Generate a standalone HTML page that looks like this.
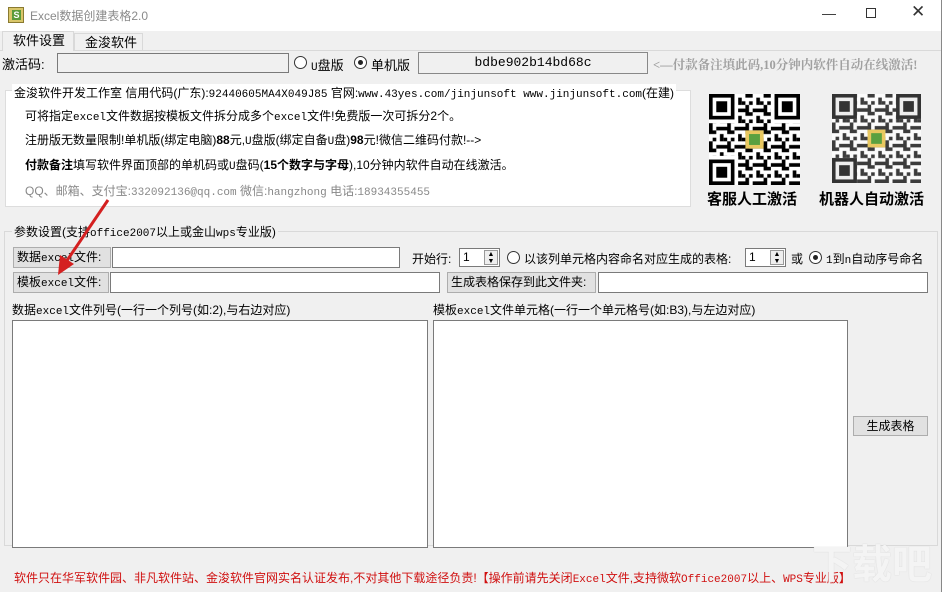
<!DOCTYPE html>
<html><head><meta charset="utf-8"><style>
*{box-sizing:border-box;margin:0;padding:0}
body{width:942px;height:592px;overflow:hidden;background:#f0f0f0;font-family:"Liberation Sans","Noto Sans CJK SC",sans-serif;font-size:12px;color:#000;position:relative}
.a{position:absolute;white-space:nowrap}
.inp{position:absolute;background:#fff;border:1px solid #7a7a7a}
.btn{position:absolute;background:#e1e1e1;border:1px solid #adadad;line-height:18px;padding-left:3px;font-size:12px}
.mono{font-family:"Liberation Mono","Noto Sans CJK SC",monospace;font-size:11px}
.radio{position:absolute;width:13px;height:13px;border:1px solid #333;border-radius:50%;background:#fff}
.radio.on::after{content:"";position:absolute;left:3px;top:3px;width:5px;height:5px;border-radius:50%;background:#222}
.spin{position:absolute;background:#fff;border:1px solid #7a7a7a;height:19px;padding-left:3px;line-height:17px}
.spin i{position:absolute;right:1px;top:1px;width:14px;height:15px;border:1px solid #999;background:#eee;font-style:normal;font-size:7px;line-height:7px;text-align:center}
</style></head><body>
<div class="a" style="left:0;top:0;width:942px;height:31px;background:#fff"></div>
<div class="a" style="left:8px;top:7px;width:16px;height:16px;background:#d9c66a;border:1px solid #8a7a30"><div style="position:absolute;left:3px;top:2px;width:9px;height:10px;background:#5a9a3a;color:#fff;font-size:9px;line-height:10px;font-weight:bold;text-align:center">S</div></div>
<div class="a" style="left:30px;top:7px;color:#8a8a8a;font-size:12px">Excel数据创建表格2.0</div>
<div class="a" style="left:822px;top:5px;color:#333;font-size:14px">—</div>
<div class="a" style="left:866px;top:8px;width:10px;height:10px;border:1px solid #333"></div>
<div class="a" style="left:911px;top:2px;color:#333;font-size:17px">✕</div>
<div class="a" style="left:941px;top:0;width:1px;height:592px;background:#888"></div>
<!-- tabs -->
<div class="a" style="left:0;top:50px;width:941px;height:1px;background:#d9d9d9"></div>
<div class="a" style="left:2px;top:31px;width:72px;height:20px;background:#f0f0f0;border:1px solid #d9d9d9;border-bottom:none;padding:1px 0 0 10px;font-size:13px;line-height:16px">软件设置</div>
<div class="a" style="left:74px;top:33px;width:69px;height:17px;background:#f0f0f0;border:1px solid #d9d9d9;border-bottom:none;padding:1px 0 0 10px;font-size:13px;line-height:16px">金浚软件</div>
<!-- row1 -->
<div class="a" style="left:2px;top:54px;font-size:13px">激活码:</div>
<div class="inp" style="left:57px;top:53px;width:232px;height:20px;background:#f0f0f0"></div>
<div class="radio" style="left:294px;top:56px"></div><div class="a" style="left:311px;top:55px;font-size:13px"><span class="mono">U</span>盘版</div>
<div class="radio on" style="left:354px;top:56px"></div><div class="a" style="left:371px;top:55px;font-size:13px">单机版</div>
<div class="inp" style="left:418px;top:52px;width:230px;height:22px;background:#f0f0f0;border-color:#888;text-align:center;line-height:20px;font-family:'Liberation Mono',monospace;font-size:13px">bdbe902b14bd68c</div>
<div class="a" style="left:653px;top:55px;color:#a0a0a0;font-weight:bold;font-size:12.5px;font-family:'Liberation Serif','Noto Serif CJK SC',serif">&lt;—付款备注填此码,10分钟内软件自动在线激活!</div>
<!-- info box -->
<div class="a" style="left:5px;top:90px;width:686px;height:117px;background:#fff;border:1px solid #ddd"></div>
<div class="a" style="left:12px;top:84px;background:#fff;padding:0 2px;font-size:12px">金浚软件开发工作室 信用代码(广东):<span class="mono">92440605MA4X049J85</span> 官网:<span class="mono">www.43yes.com/jinjunsoft  www.jinjunsoft.com</span>(在建)</div>
<div class="a" style="left:25px;top:107px;font-size:12px">可将指定<span class="mono">excel</span>文件数据按模板文件拆分成多个<span class="mono">excel</span>文件!免费版一次可拆分2个。</div>
<div class="a" style="left:25px;top:131px;font-size:12px">注册版无数量限制!单机版(绑定电脑)<b>88</b>元,<span class="mono">U</span>盘版(绑定自备<span class="mono">U</span>盘)<b>98</b>元!微信二维码付款!--&gt;</div>
<div class="a" style="left:25px;top:156px;font-size:12px"><b>付款备注</b>填写软件界面顶部的单机码或<span class="mono">U</span>盘码(<b>15个数字与字母</b>),10分钟内软件自动在线激活。</div>
<div class="a" style="left:25px;top:182px;font-size:12px;color:#888">QQ、邮箱、支付宝:<span class="mono">332092136@qq.com</span>  微信:<span class="mono">hangzhong</span>  电话:<span class="mono">18934355455</span></div>
<!-- QR -->
<svg class="a" style="left:709px;top:94px" width="91" height="91" viewBox="0 0 25 25"><defs><pattern id="p" width="5" height="5" patternUnits="userSpaceOnUse"><rect width="5" height="5" fill="#fff"/><rect x="0" y="0" width="2" height="1" fill="#000"/><rect x="3" y="1" width="1" height="2" fill="#000"/><rect x="1" y="2" width="1" height="1" fill="#000"/><rect x="2" y="4" width="3" height="1" fill="#000"/><rect x="0" y="3" width="1" height="2" fill="#000"/><rect x="4" y="2" width="1" height="1" fill="#000"/></pattern></defs><rect width="25" height="25" fill="url(#p)"/><g fill="#000"><rect width="7" height="7"/><rect x="18" width="7" height="7"/><rect y="18" width="7" height="7"/></g><g fill="#fff"><rect x="1" y="1" width="5" height="5"/><rect x="19" y="1" width="5" height="5"/><rect x="1" y="19" width="5" height="5"/><rect x="7" y="0" width="1" height="8"/><rect x="0" y="7" width="8" height="1"/><rect x="17" y="0" width="1" height="8"/><rect x="17" y="7" width="8" height="1"/><rect x="0" y="17" width="8" height="1"/><rect x="7" y="17" width="1" height="8"/></g><g fill="#000"><rect x="2" y="2" width="3" height="3"/><rect x="20" y="2" width="3" height="3"/><rect x="2" y="20" width="3" height="3"/></g><rect x="10" y="10" width="5" height="5" fill="#e8c860"/><rect x="11" y="11" width="3" height="3" fill="#5aa040"/></svg>
<svg class="a" style="left:832px;top:94px" width="89" height="89" viewBox="0 0 25 25"><rect width="25" height="25" fill="url(#p)" opacity=".75"/><g fill="#333"><rect width="7" height="7"/><rect x="18" width="7" height="7"/><rect y="18" width="7" height="7"/></g><g fill="#eee"><rect x="1" y="1" width="5" height="5"/><rect x="19" y="1" width="5" height="5"/><rect x="1" y="19" width="5" height="5"/></g><g fill="#333"><rect x="2" y="2" width="3" height="3"/><rect x="20" y="2" width="3" height="3"/><rect x="2" y="20" width="3" height="3"/></g><rect x="10" y="10" width="5" height="5" fill="#e8c860"/><rect x="11" y="11" width="3" height="3" fill="#5aa040"/></svg>
<div class="a" style="left:707px;top:188px;font-size:15px;font-weight:bold">客服人工激活</div>
<div class="a" style="left:819px;top:188px;font-size:15px;font-weight:bold">机器人自动激活</div>
<!-- params group -->
<div class="a" style="left:4px;top:231px;width:934px;height:315px;border:1px solid #d9d9d9"></div>
<div class="a" style="left:12px;top:223px;background:#f0f0f0;padding:0 2px;font-size:12px">参数设置(支持<span class="mono">office2007</span>以上或金山<span class="mono">wps</span>专业版)</div>
<div class="btn" style="left:13px;top:247px;width:98px;height:21px">数据<span class="mono">excel</span>文件:</div>
<div class="inp" style="left:112px;top:247px;width:288px;height:21px"></div>
<div class="a" style="left:412px;top:250px;font-size:12px">开始行:</div>
<div class="spin" style="left:459px;top:248px;width:41px">1<i>▲<br>▼</i></div>
<div class="radio" style="left:507px;top:251px"></div>
<div class="a" style="left:524px;top:250px;font-size:12px">以该列单元格内容命名对应生成的表格:</div>
<div class="spin" style="left:745px;top:248px;width:41px">1<i>▲<br>▼</i></div>
<div class="a" style="left:791px;top:250px;font-size:12px">或</div>
<div class="radio on" style="left:809px;top:251px"></div>
<div class="a" style="left:826px;top:250px;font-size:12px"><span class="mono">1</span>到<span class="mono">n</span>自动序号命名</div>
<div class="btn" style="left:13px;top:272px;width:96px;height:21px">模板<span class="mono">excel</span>文件:</div>
<div class="inp" style="left:110px;top:272px;width:330px;height:21px"></div>
<div class="btn" style="left:447px;top:272px;width:149px;height:21px">生成表格保存到此文件夹:</div>
<div class="inp" style="left:598px;top:272px;width:330px;height:21px"></div>
<div class="a" style="left:12px;top:301px;font-size:12px">数据<span class="mono">excel</span>文件列号(一行一个列号(如:2),与右边对应)</div>
<div class="a" style="left:433px;top:301px;font-size:12px">模板<span class="mono">excel</span>文件单元格(一行一个单元格号(如:B3),与左边对应)</div>
<div class="inp" style="left:12px;top:320px;width:416px;height:228px"></div>
<div class="inp" style="left:433px;top:320px;width:415px;height:228px"></div>
<div class="btn" style="left:853px;top:416px;width:75px;height:20px;text-align:center;padding:0">生成表格</div>
<div class="a" style="left:14px;top:569px;color:#d01010;font-size:12px">软件只在华军软件园、非凡软件站、金浚软件官网实名认证发布,不对其他下载途径负责!【操作前请先关闭<span class="mono">Excel</span>文件,支持微软<span class="mono">Office2007</span>以上、<span class="mono">WPS</span>专业版】</div>
<div class="a" style="left:812px;top:532px;font-size:40px;color:#f4f4f4;font-weight:bold;text-shadow:0 0 1px #ccc">下载吧</div>
<svg class="a" style="left:0;top:0" width="942" height="592"><line x1="108" y1="200" x2="66" y2="262" stroke="#d42020" stroke-width="3"/><polygon points="58,275 60,255 74,264" fill="#d42020"/></svg>
</body></html>
